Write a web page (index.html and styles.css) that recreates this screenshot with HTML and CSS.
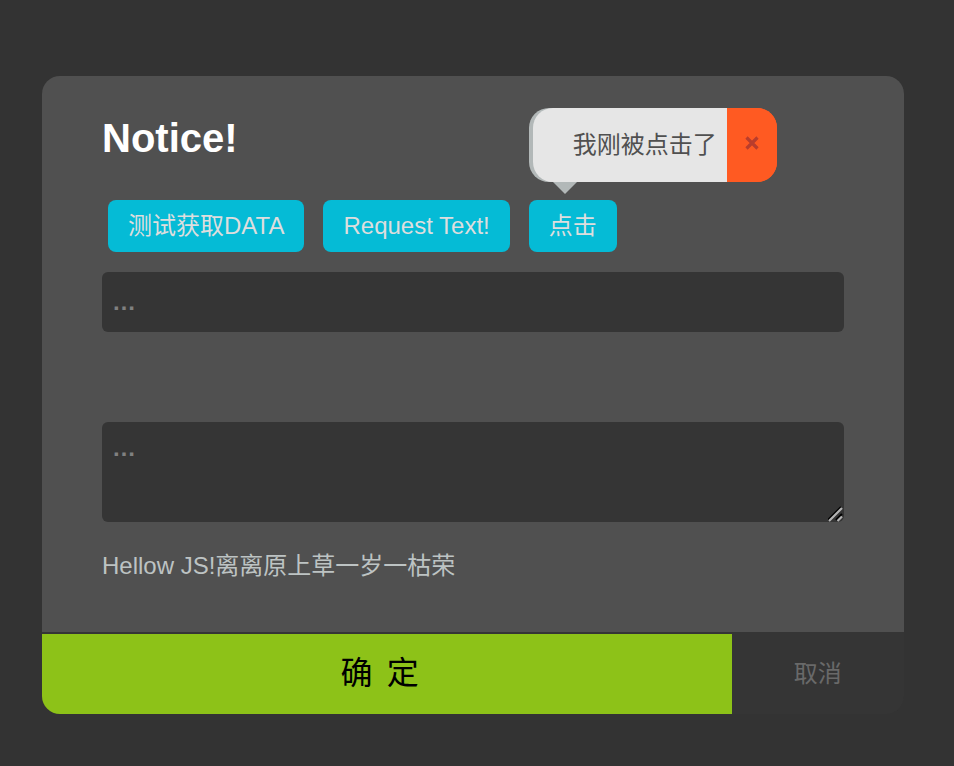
FILE: index.html
```html
<!DOCTYPE html>
<html lang="zh-CN">
<head>
<meta charset="utf-8">
<meta name="viewport" content="width=device-width, initial-scale=1">
<title>Notice!</title>
<link rel="stylesheet" href="styles.css">
</head>
<body>
<main class="dialog">
  <section class="body">
    <h1 class="title">Notice!</h1>
    <div class="actions">
      <button class="btn" type="button">测试获取DATA</button>
      <button class="btn" type="button">Request Text!</button>
      <div class="anchor">
        <button class="btn" type="button">点击</button>
        <div class="tip" role="status">
          <span class="tip-text">我刚被点击了</span>
          <button class="tip-close" type="button" aria-label="关闭">
            <svg width="14" height="14" viewBox="0 0 14 14" aria-hidden="true"><path d="M1.5 1.5 12.5 12.5M12.5 1.5 1.5 12.5" fill="none" stroke="currentColor" stroke-width="3.2"/></svg>
          </button>
        </div>
      </div>
    </div>
    <input class="field" type="text" placeholder="…" aria-label="单行文本">
    <div class="area">
      <textarea class="field field-multi" placeholder="…" aria-label="多行文本"></textarea>
      <svg class="grip" width="16" height="16" viewBox="0 0 16 16" aria-hidden="true">
        <path d="M0 14 13 1M8 14 14 8" stroke="#000" stroke-width="2" fill="none"/>
        <path d="M1 15 14 2M9.500 15 14 10.500" stroke="#b4b4b4" stroke-width="2.200" fill="none"/>
      </svg>
    </div>
    <p class="message">Hellow JS!离离原上草一岁一枯荣</p>
  </section>
  <footer class="footer">
    <button class="confirm" type="button">确&nbsp;&nbsp;定&nbsp;&nbsp;</button>
    <button class="cancel" type="button">取消</button>
  </footer>
</main>
</body>
</html>
```

FILE: styles.css
```css
* {
  box-sizing: border-box;
}

body {
  margin: 0;
  padding: 76px 50px 52px 42px;
  background: #333;
  color: #bdc3c3;
  font-family: "Liberation Sans", "Noto Sans CJK SC", sans-serif;
  font-size: 24px;
  line-height: 28px;
}

button,
input,
textarea {
  margin: 0;
  padding: 0;
  border: 0;
  font: inherit;
}

button {
  cursor: pointer;
}

.dialog {
  border-radius: 18px;
  background: #353535;
}

.body {
  padding: 32px 60px 52px;
  border-radius: 18px 18px 0 0;
  background: #505050;
}

.title {
  margin: 0 0 32px;
  color: #fff;
  font-size: 40px;
  line-height: 60px;
}

.actions {
  display: flex;
  gap: 19px;
  margin: 0 6px 20px;
}

.btn {
  display: block;
  height: 52px;
  padding: 0 20px;
  border-radius: 8px;
  background: #05bbd6;
  color: #dedede;
  white-space: nowrap;
}

.anchor {
  position: relative;
}

.tip {
  position: absolute;
  bottom: calc(100% + 18px);
  left: 0;
  display: flex;
  height: 74px;
  padding-left: 4px;
  border-radius: 20px;
  background: linear-gradient(90deg, #b2b8b8 50%, #ff5a22 50%);
}

.tip::after {
  content: "";
  position: absolute;
  top: 100%;
  left: 24px;
  border: 12px solid transparent;
  border-top-color: #b2b8b8;
  border-bottom: 0;
}

.tip-text {
  display: flex;
  align-items: center;
  padding: 0 10px 0 40px;
  border-radius: 20px 0 0 20px;
  background: #e6e6e6;
  color: #505050;
  white-space: nowrap;
}

.tip-close {
  display: flex;
  align-items: center;
  justify-content: center;
  width: 50px;
  padding: 0 0 4px;
  border-radius: 0 20px 20px 0;
  background: #ff5a22;
  color: #b93d2c;
}

.field {
  display: block;
  width: 100%;
  height: 60px;
  padding: 0 10px;
  border-radius: 6px;
  background: #353535;
  color: #bdc3c3;
}

.field::placeholder {
  color: #808080;
  font-weight: bold;
}

.field-multi {
  height: 100px;
  padding: 12px 10px;
  resize: none;
}

.area {
  position: relative;
  margin: 90px 0 30px;
}

.grip {
  position: absolute;
  right: 0;
  bottom: 0;
}

.message {
  margin: 0;
}

.footer {
  display: flex;
  height: 82px;
  padding-top: 2px;
}

.confirm {
  flex: 4;
  padding-bottom: 8px;
  border-radius: 0 0 0 18px;
  background: #8dc218;
  color: #000;
  font-family: "Noto Sans CJK SC", sans-serif;
  font-size: 32px;
}

.cancel {
  flex: 1;
  border-radius: 0 0 18px 0;
  background: #353535;
  color: #696969;
}
```
